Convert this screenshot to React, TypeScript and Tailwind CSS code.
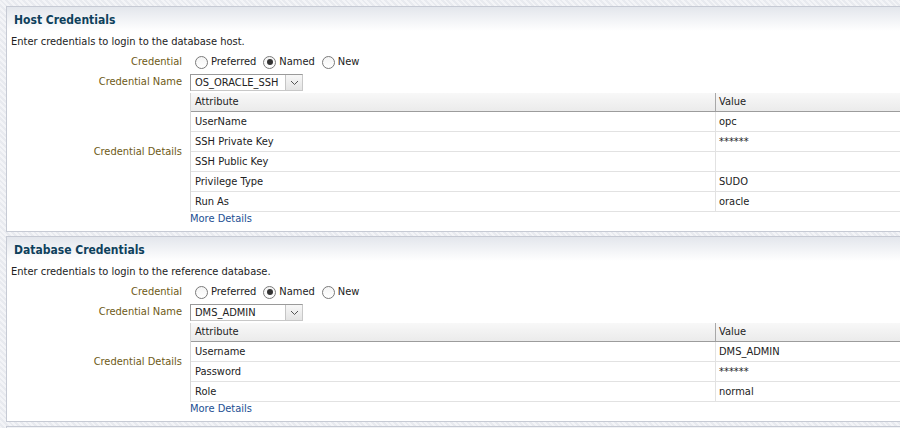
import React from "react";

type Row = { attr: string; value: string };

const font = "font-['DejaVu_Sans_Condensed','Liberation_Sans',sans-serif]";

function Radio({ label, checked }: { label: string; checked?: boolean }) {
  return (
    <span className="flex items-center">
      <span className="w-[13px] h-[13px] rounded-full border border-[#7a7a7a] bg-[linear-gradient(#f4f4f4,#ffffff)] flex items-center justify-center">
        {checked && <span className="w-[6px] h-[6px] rounded-full bg-[#333]" />}
      </span>
      <span className="ml-[3px] mr-[7px] text-[#222]">{label}</span>
    </span>
  );
}

function Select({ value }: { value: string }) {
  return (
    <div className="flex h-[17px] w-[113px] border border-[#9a9a9a] border-r-[#c8c8c8] border-b-[#c8c8c8] bg-white">
      <span className="flex-1 pl-[4px] leading-[15px] text-[#222]">{value}</span>
      <span className="w-[17px] border-l border-[#c5c5c5] bg-[linear-gradient(#f7f7f7,#e4e4e4)] flex items-center justify-center">
        <svg width="9" height="6" viewBox="0 0 9 6">
          <path d="M1 1 L4.5 4.5 L8 1" fill="none" stroke="#555" strokeWidth="1" />
        </svg>
      </span>
    </div>
  );
}

function Label({ children }: { children: React.ReactNode }) {
  return <div className="text-right text-[#6e5a16] pr-[8px]">{children}</div>;
}

function Panel({ title, intro, select, rows }: { title: string; intro: string; select: string; rows: Row[] }) {
  return (
    <div className="bg-white border-l border-t border-b border-[#c6cad4]">
      <div className="h-[24px] bg-[linear-gradient(#e3e6ec,#ffffff)] pl-[7px] flex items-center pt-[1px]">
        <span className="font-bold text-[12px] text-[#0e415c]">{title}</span>
      </div>
      <div className="h-[21px] pl-[4px] pt-[4px] leading-[14px] text-[#222]">{intro}</div>
      <div className="grid grid-cols-[183px_1fr]">
        <div className="h-[20px] flex items-center justify-end"><Label>Credential</Label></div>
        <div className="h-[20px] flex items-center pl-[5px]">
          <Radio label="Preferred" />
          <Radio label="Named" checked />
          <Radio label="New" />
        </div>
        <div className="h-[20px] flex items-center justify-end"><Label>Credential Name</Label></div>
        <div className="h-[21px] flex items-center">
          <Select value={select} />
        </div>
        <div className="flex items-center justify-end"><Label>Credential Details</Label></div>
        <div className="border-l border-[#d6d6d6]">
          <div className="flex h-[19px] bg-[linear-gradient(#f8f8f8,#ebebeb)] border-b border-[#9c9c9c] leading-[18px] text-[#222]">
            <div className="w-[524px] pl-[4px]">Attribute</div>
            <div className="flex-1 border-l border-[#a8a8a8] pl-[3px]">Value</div>
          </div>
          {rows.map((r) => (
            <div key={r.attr} className="flex h-[20px] border-b border-[#e2e2e2] leading-[19px] text-[#222]">
              <div className="w-[524px] pl-[4px]">{r.attr}</div>
              <div className="flex-1 border-l border-[#e2e2e2] pl-[3px]">{r.value}</div>
            </div>
          ))}
        </div>
        <div />
        <div className="h-[19px] leading-[14px] text-[#1c4f93]">More Details</div>
      </div>
    </div>
  );
}

export default function App() {
  return (
    <div
      className={`w-[900px] h-[428px] overflow-hidden pt-[6px] pl-[6px] flex flex-col gap-[4px] text-[11px] ${font} bg-[repeating-linear-gradient(45deg,#f3f4f7_0px,#f3f4f7_2px,#e8eaef_2px,#e8eaef_4px)]`}
    >
      <Panel
        title="Host Credentials"
        intro="Enter credentials to login to the database host."
        select="OS_ORACLE_SSH"
        rows={[
          { attr: "UserName", value: "opc" },
          { attr: "SSH Private Key", value: "******" },
          { attr: "SSH Public Key", value: "" },
          { attr: "Privilege Type", value: "SUDO" },
          { attr: "Run As", value: "oracle" },
        ]}
      />
      <Panel
        title="Database Credentials"
        intro="Enter credentials to login to the reference database."
        select="DMS_ADMIN"
        rows={[
          { attr: "Username", value: "DMS_ADMIN" },
          { attr: "Password", value: "******" },
          { attr: "Role", value: "normal" },
        ]}
      />
      <div className="h-[20px] bg-[linear-gradient(#e3e6ec,#ffffff)] border-l border-t border-[#c6cad4]" />
    </div>
  );
}
